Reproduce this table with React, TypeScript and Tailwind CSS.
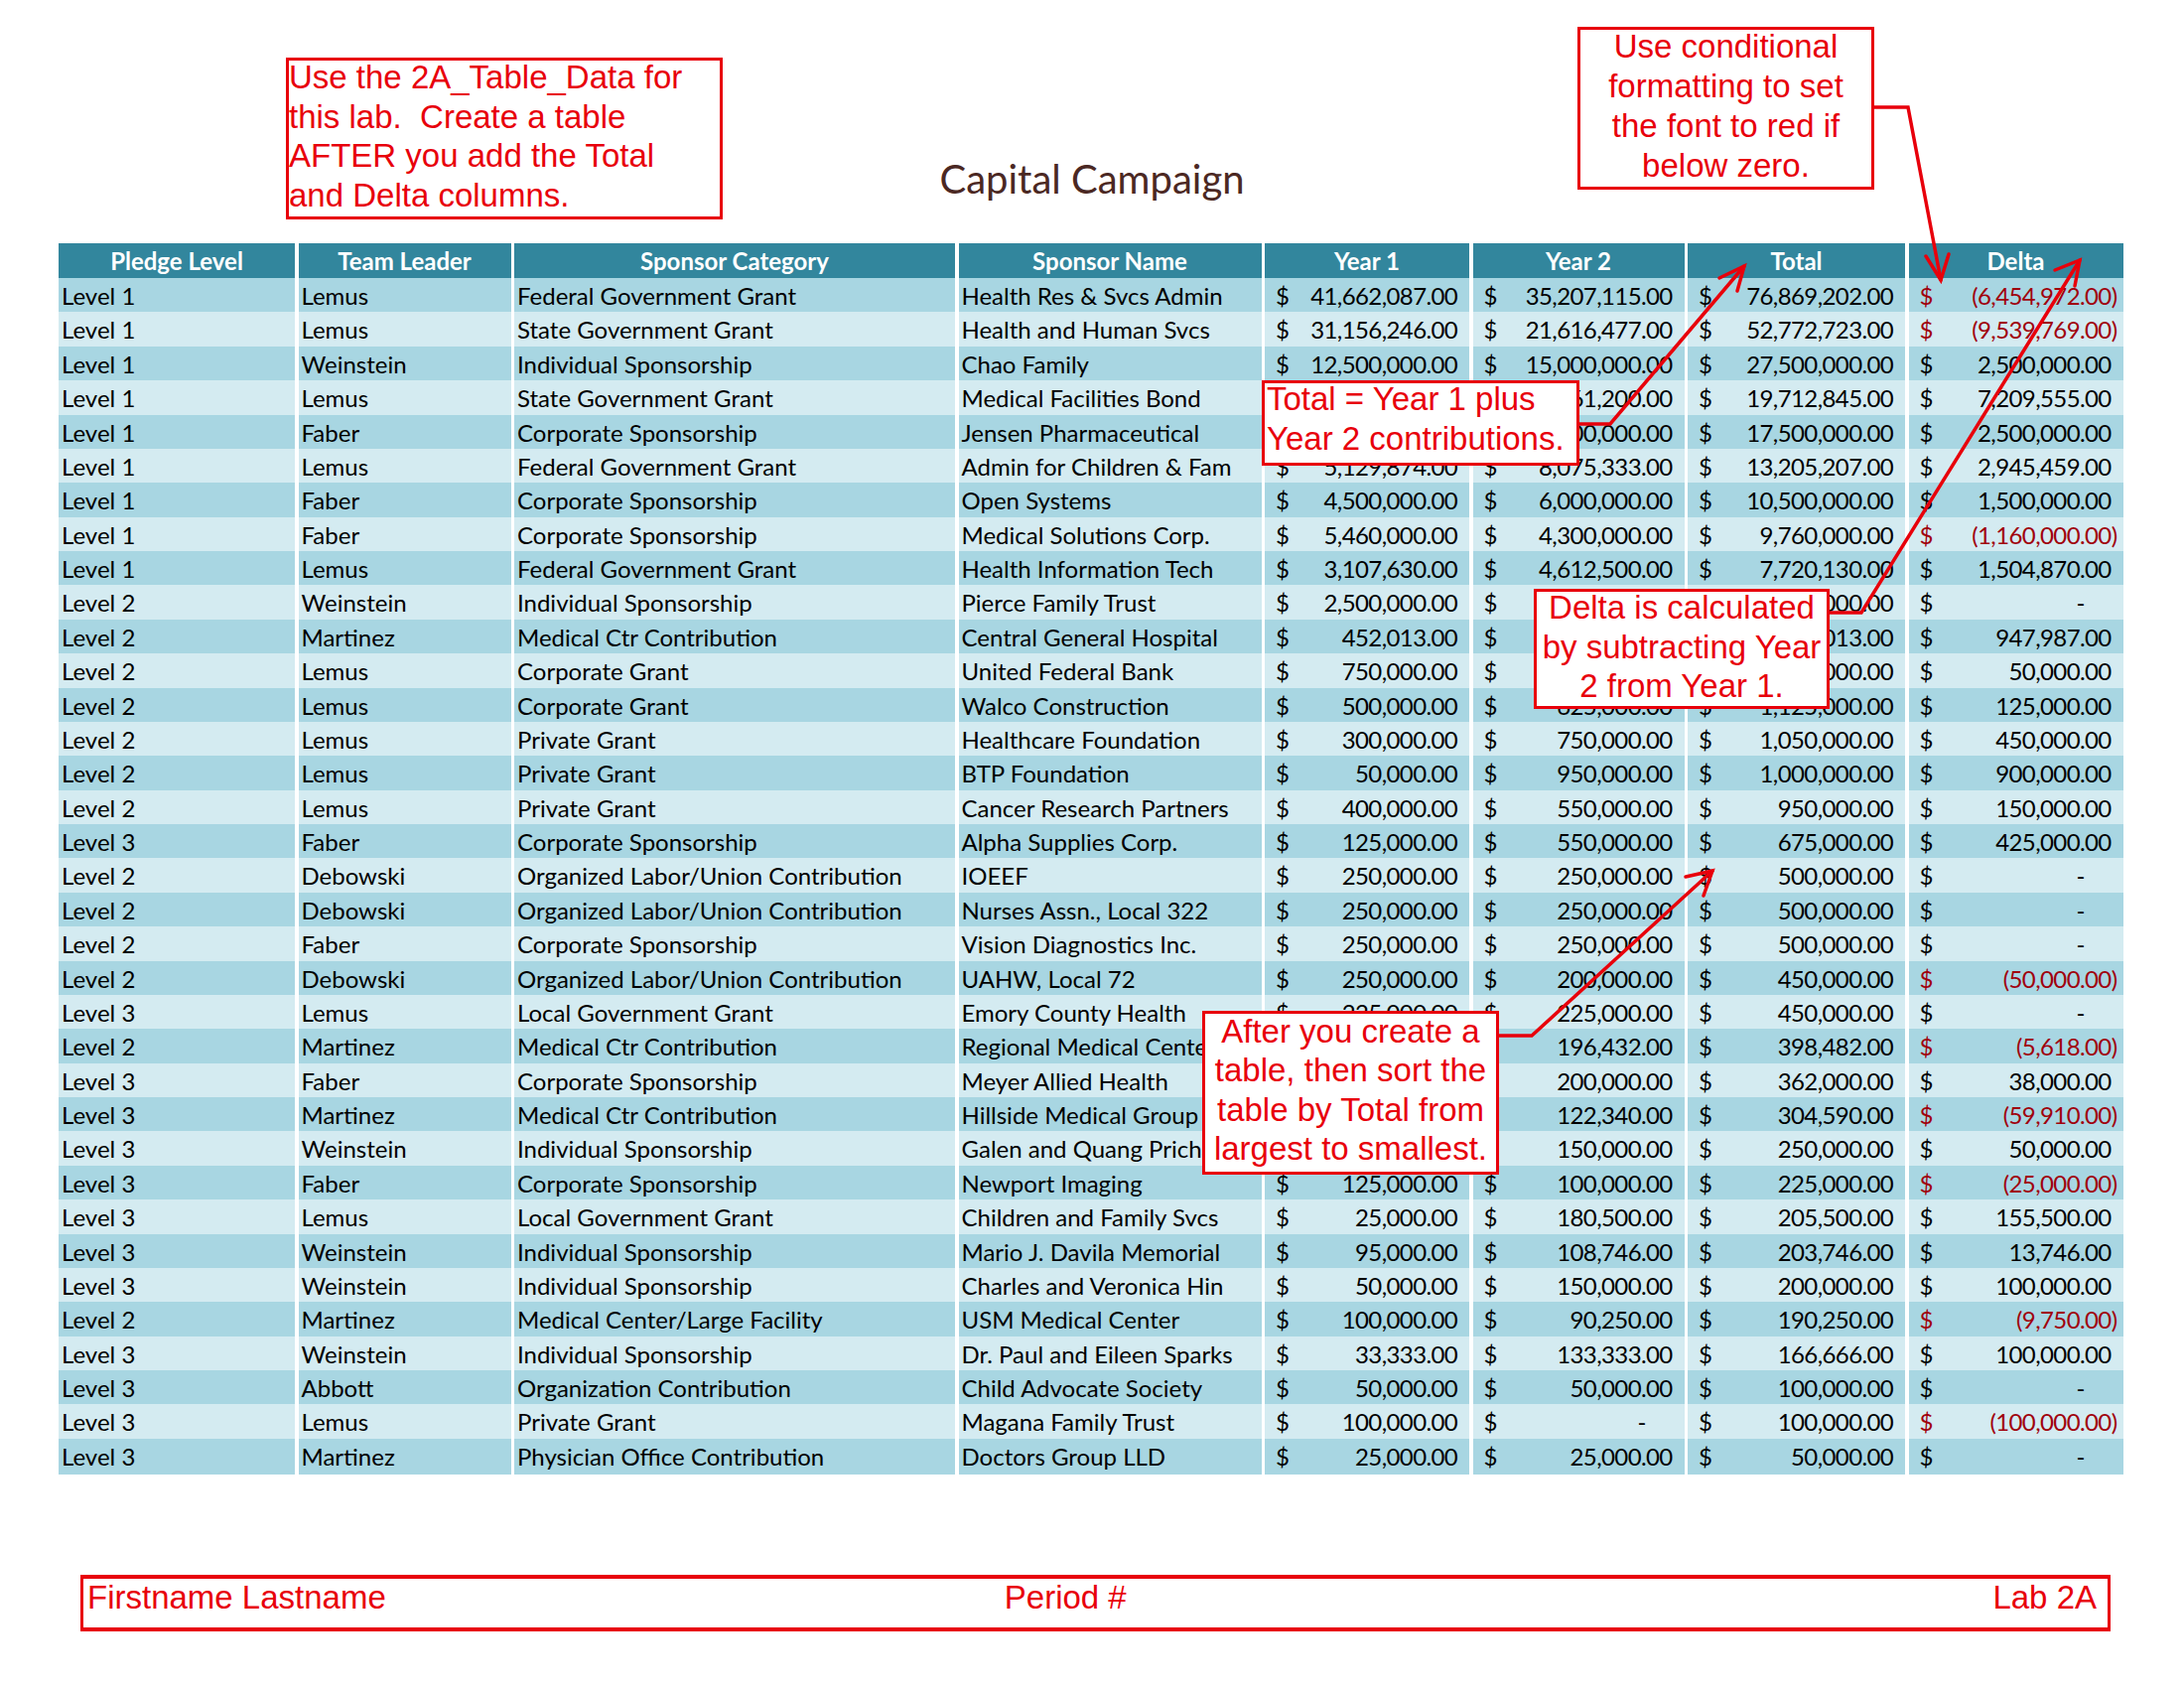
import React from 'react';

type Row = [string, string, string, string, number, number];

const rows: Row[] = [
  ['Level 1', 'Lemus', 'Federal Government Grant', 'Health Res & Svcs Admin', 41662087, 35207115],
  ['Level 1', 'Lemus', 'State Government Grant', 'Health and Human Svcs', 31156246, 21616477],
  ['Level 1', 'Weinstein', 'Individual Sponsorship', 'Chao Family', 12500000, 15000000],
  ['Level 1', 'Lemus', 'State Government Grant', 'Medical Facilities Bond', 6251645, 13461200],
  ['Level 1', 'Faber', 'Corporate Sponsorship', 'Jensen Pharmaceutical', 7500000, 10000000],
  ['Level 1', 'Lemus', 'Federal Government Grant', 'Admin for Children & Fam', 5129874, 8075333],
  ['Level 1', 'Faber', 'Corporate Sponsorship', 'Open Systems', 4500000, 6000000],
  ['Level 1', 'Faber', 'Corporate Sponsorship', 'Medical Solutions Corp.', 5460000, 4300000],
  ['Level 1', 'Lemus', 'Federal Government Grant', 'Health Information Tech', 3107630, 4612500],
  ['Level 2', 'Weinstein', 'Individual Sponsorship', 'Pierce Family Trust', 2500000, 2500000],
  ['Level 2', 'Martinez', 'Medical Ctr Contribution', 'Central General Hospital', 452013, 1400000],
  ['Level 2', 'Lemus', 'Corporate Grant', 'United Federal Bank', 750000, 800000],
  ['Level 2', 'Lemus', 'Corporate Grant', 'Walco Construction', 500000, 625000],
  ['Level 2', 'Lemus', 'Private Grant', 'Healthcare Foundation', 300000, 750000],
  ['Level 2', 'Lemus', 'Private Grant', 'BTP Foundation', 50000, 950000],
  ['Level 2', 'Lemus', 'Private Grant', 'Cancer Research Partners', 400000, 550000],
  ['Level 3', 'Faber', 'Corporate Sponsorship', 'Alpha Supplies Corp.', 125000, 550000],
  ['Level 2', 'Debowski', 'Organized Labor/Union Contribution', 'IOEEF', 250000, 250000],
  ['Level 2', 'Debowski', 'Organized Labor/Union Contribution', 'Nurses Assn., Local 322', 250000, 250000],
  ['Level 2', 'Faber', 'Corporate Sponsorship', 'Vision Diagnostics Inc.', 250000, 250000],
  ['Level 2', 'Debowski', 'Organized Labor/Union Contribution', 'UAHW, Local 72', 250000, 200000],
  ['Level 3', 'Lemus', 'Local Government Grant', 'Emory County Health', 225000, 225000],
  ['Level 2', 'Martinez', 'Medical Ctr Contribution', 'Regional Medical Center', 202050, 196432],
  ['Level 3', 'Faber', 'Corporate Sponsorship', 'Meyer Allied Health', 162000, 200000],
  ['Level 3', 'Martinez', 'Medical Ctr Contribution', 'Hillside Medical Group', 182250, 122340],
  ['Level 3', 'Weinstein', 'Individual Sponsorship', 'Galen and Quang Prichard', 100000, 150000],
  ['Level 3', 'Faber', 'Corporate Sponsorship', 'Newport Imaging', 125000, 100000],
  ['Level 3', 'Lemus', 'Local Government Grant', 'Children and Family Svcs', 25000, 180500],
  ['Level 3', 'Weinstein', 'Individual Sponsorship', 'Mario J. Davila Memorial', 95000, 108746],
  ['Level 3', 'Weinstein', 'Individual Sponsorship', 'Charles and Veronica Hin', 50000, 150000],
  ['Level 2', 'Martinez', 'Medical Center/Large Facility', 'USM Medical Center', 100000, 90250],
  ['Level 3', 'Weinstein', 'Individual Sponsorship', 'Dr. Paul and Eileen Sparks', 33333, 133333],
  ['Level 3', 'Abbott', 'Organization Contribution', 'Child Advocate Society', 50000, 50000],
  ['Level 3', 'Lemus', 'Private Grant', 'Magana Family Trust', 100000, 0],
  ['Level 3', 'Martinez', 'Physician Office Contribution', 'Doctors Group LLD', 25000, 25000],
];

const headers = ['Pledge Level', 'Team Leader', 'Sponsor Category', 'Sponsor Name', 'Year 1', 'Year 2', 'Total', 'Delta'];

const cols = 'grid grid-cols-[238px_214px_444px_305px_206px_213px_219px_216px] gap-x-[3.5px]';
const red = 'text-[#e8000b]';
const note = "font-['Liberation_Sans',Arial,sans-serif] text-[33px]";

const fmt = (n: number) =>
  Math.abs(n).toLocaleString('en-US', { minimumFractionDigits: 2, maximumFractionDigits: 2 });

function Money({ value, bg }: { value: number; bg: string }) {
  const neg = value < 0;
  return (
    <div className={`${bg} flex items-center justify-between pl-[11px] pr-[6px] ${neg ? 'text-[#a0000c]' : ''}`}>
      <span>$</span>
      {value === 0 ? (
        <span className="mr-[32px]">-</span>
      ) : neg ? (
        <span className="tracking-[-0.6px]">({fmt(value)})</span>
      ) : (
        <span className="tracking-[-0.6px]">
          {fmt(value)}
          <span className="invisible">)</span>
        </span>
      )}
    </div>
  );
}

function Arrow({ path, head }: { path: string; head: string }) {
  return (
    <g fill="none" stroke="#e8000b" strokeWidth={3.5} strokeLinejoin="miter" strokeLinecap="round">
      <polyline points={path} />
      <polyline points={head} />
    </g>
  );
}

export default function App() {
  return (
    <div className="relative w-[2200px] h-[1700px] overflow-hidden bg-white font-['Lato',sans-serif] text-[24px] text-black">
      {/* top area */}
      <div className="flex h-[245px]">
        <div className="ml-[288px] mt-[58px] w-[440px] h-[163px] border-[3px] border-[#e8000b] bg-white">
          <p className={`-mt-[3px] ${note} leading-[39.7px] ${red}`}>
            Use the 2A_Table_Data for
            <br />
            this lab.&nbsp; Create a table
            <br />
            AFTER you add the Total
            <br />
            and Delta columns.
          </p>
        </div>
        <div className="w-[744px] pt-[160px] text-center">
          <h1 className="text-[40px] leading-[40px] text-[#4b2823]">Capital Campaign</h1>
        </div>
      </div>

      {/* table */}
      <div className="ml-[59px] w-fit">
        <div className={`${cols} h-[31px]`}>
          {headers.map((h) => (
            <div key={h} className="flex items-center justify-center bg-[#32869d] font-bold text-white">
              {h}
            </div>
          ))}
        </div>
        <div className="mt-[4px] flex flex-col gap-y-[2.38px]">
          {rows.map((r, i) => {
            const bg = i % 2 === 0 ? 'bg-[#a8d6e2]' : 'bg-[#d4ebf1]';
            const total = r[4] + r[5];
            const delta = r[5] - r[4];
            return (
              <div key={i} className={`${cols} h-[32px]`}>
                {r.slice(0, 4).map((t, j) => (
                  <div key={j} className={`${bg} flex items-center overflow-hidden whitespace-nowrap pl-[3px]`}>
                    {t as string}
                  </div>
                ))}
                <Money value={r[4]} bg={bg} />
                <Money value={r[5]} bg={bg} />
                <Money value={total} bg={bg} />
                <Money value={delta} bg={bg} />
              </div>
            );
          })}
        </div>
      </div>

      {/* footer */}
      <div
        className={`mt-[105px] ml-[81px] flex h-[57px] w-[2045px] border-x-[3px] border-y-4 border-[#e8000b] pt-[2px] ${note} leading-[33px] ${red}`}
      >
        <span className="pl-[4px]">Firstname Lastname</span>
        <span className="ml-[623px]">Period #</span>
        <span className="ml-auto pr-[11px]">Lab 2A</span>
      </div>

      {/* callouts laid over the sheet */}
      <div className="absolute left-[1589px] top-[27px] h-[164px] w-[299px] border-[3px] border-[#e8000b] bg-white text-center">
        <p className={`-mt-[3px] ${note} leading-[40px] ${red}`}>
          Use conditional
          <br />
          formatting to set
          <br />
          the font to red if
          <br />
          below zero.
        </p>
      </div>
      <div className="absolute left-[1271px] top-[383px] h-[86px] w-[320px] border-[3px] border-[#e8000b] bg-white pl-[2px]">
        <p className={`-mt-[4px] whitespace-nowrap ${note} leading-[40px] ${red}`}>
          Total = Year 1 plus
          <br />
          Year 2 contributions.
        </p>
      </div>
      <div className="absolute left-[1545px] top-[593px] h-[121px] w-[298px] border-[3px] border-[#e8000b] bg-white text-center">
        <p className={`-mt-[4px] whitespace-nowrap ${note} leading-[39.5px] ${red}`}>
          Delta is calculated
          <br />
          by subtracting Year
          <br />2 from Year 1.
        </p>
      </div>
      <div className="absolute left-[1211px] top-[1018px] h-[165px] w-[299px] border-[3px] border-[#e8000b] bg-white text-center">
        <p className={`-mt-[2px] whitespace-nowrap ${note} leading-[39.4px] ${red}`}>
          After you create a
          <br />
          table, then sort the
          <br />
          table by Total from
          <br />
          largest to smallest.
        </p>
      </div>

      <svg className="pointer-events-none absolute left-0 top-0" width={2200} height={1700}>
        <Arrow path="1888,108 1922,108 1955,282" head="1940,258 1955,282 1963,256" />
        <Arrow path="1591,427 1622,427 1757,268" head="1732,280 1757,268 1750,293" />
        <Arrow path="1843,617 1875,617 2095,262" head="2070,272 2095,262 2090,288" />
        <Arrow path="1510,1043 1543,1043 1725,877" head="1698,883 1725,877 1716,902" />
      </svg>
    </div>
  );
}
